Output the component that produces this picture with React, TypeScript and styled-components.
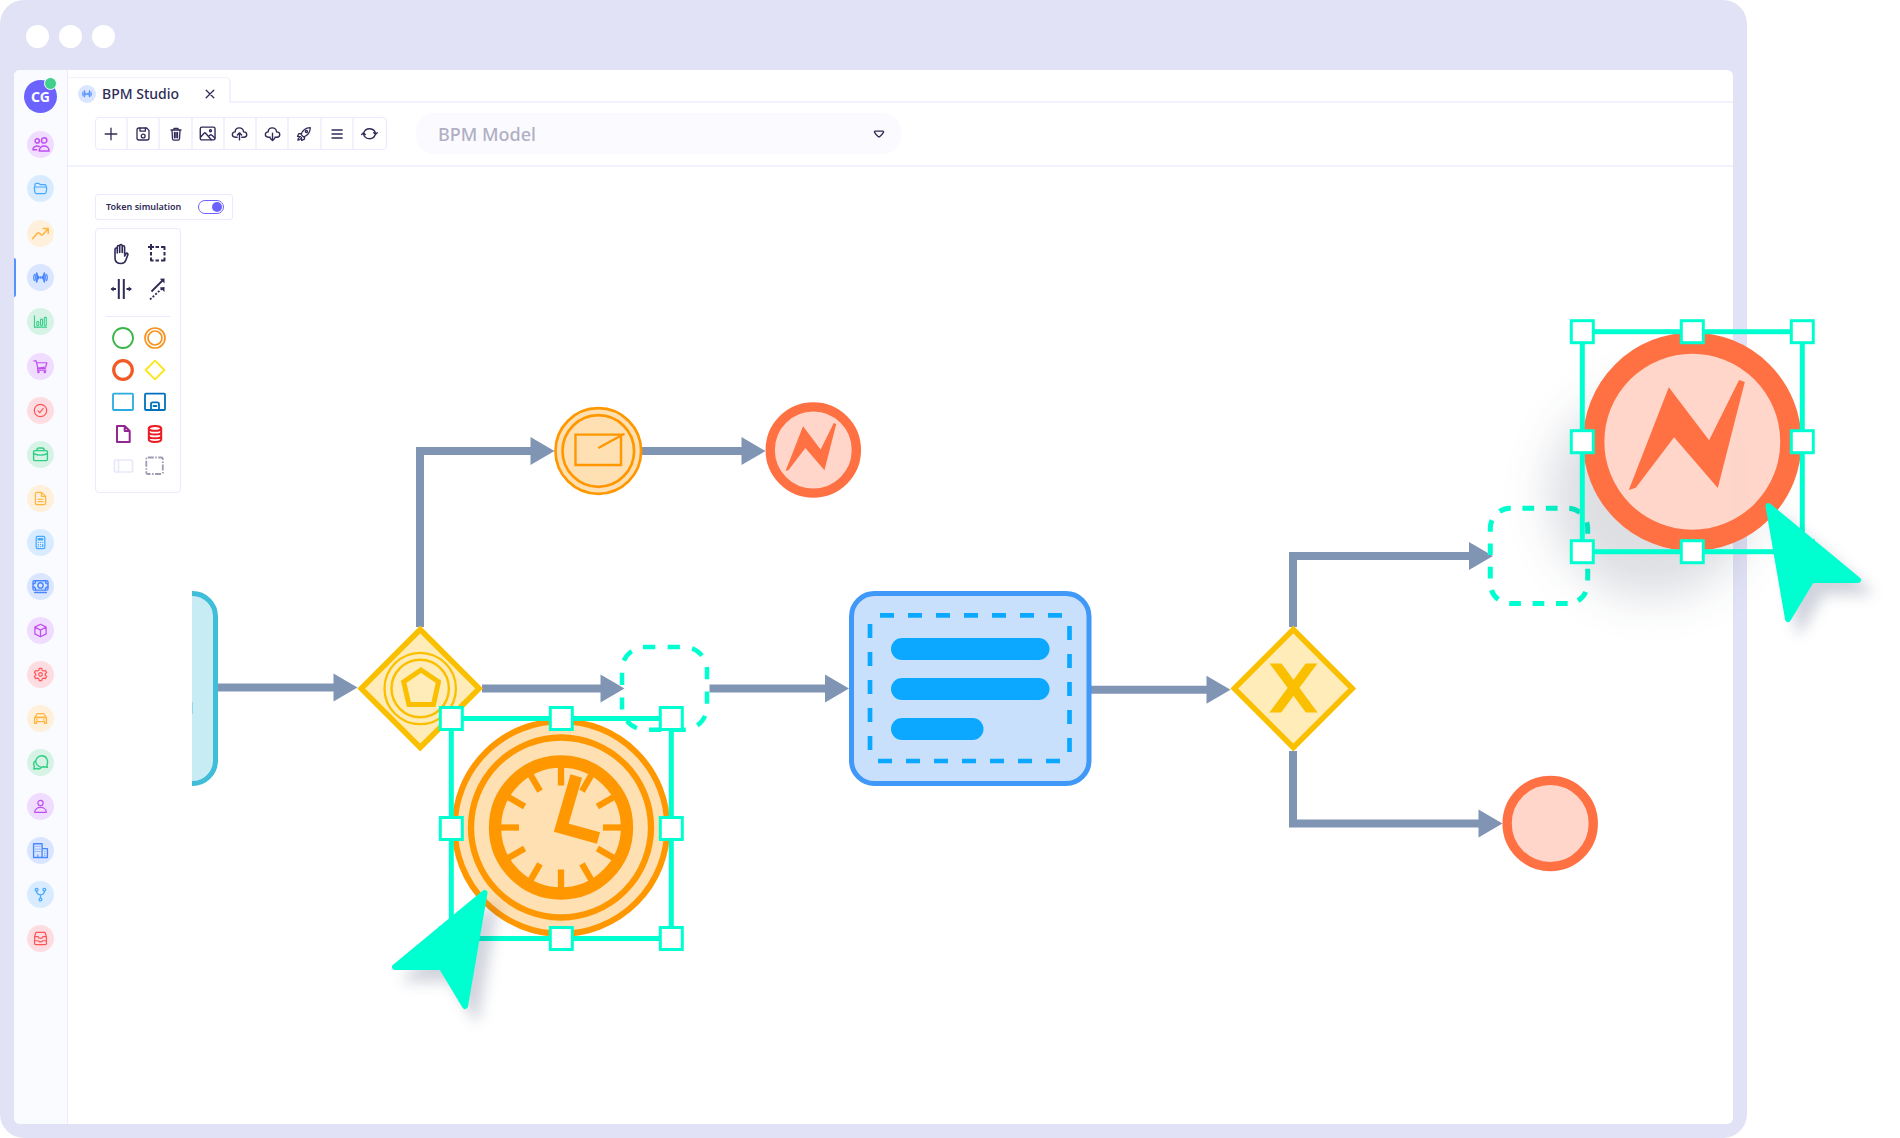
import React from "react";
import styled, { createGlobalStyle } from "styled-components";

const color = {
  frame: "#e2e2f6",
  line: "#f2f1fe",
  panelLine: "#ebe9ff",
  ink: "#2f2b57",
  muted: "#b0afc3",
  primary: "#6c63ff",
  flow: "#8094b4",
  select: "#00ffd0",
};

const GlobalStyle = createGlobalStyle`
  *, *::before, *::after { box-sizing: border-box; }
  body { margin: 0; background: #fff; font-family: "Noto Sans", "Open Sans", sans-serif; color: ${color.ink}; overflow-x: hidden; }
  button, select, input { font: inherit; color: inherit; margin: 0; }
`;

/* ---------- shell ---------- */

const Page = styled.div`
  display: flex;
  min-height: 100vh;
  padding-right: 153px;
`;

const Window = styled.div`
  flex: 1;
  display: flex;
  flex-direction: column;
  min-width: 0;
  padding: 0 14px 14px;
  border-radius: 24px;
  background: ${color.frame};
`;

const TitleBar = styled.div`
  display: flex;
  align-items: center;
  gap: 10px;
  height: 70px;
  padding: 3px 0 0 12px;
`;

const WindowDot = styled.span`
  width: 23px;
  height: 23px;
  border-radius: 50%;
  background: #fff;
`;

const Body = styled.div`
  flex: 1;
  display: flex;
  border-radius: 6px;
  background: #fff;
`;

const Sidebar = styled.nav`
  flex: none;
  display: flex;
  flex-direction: column;
  align-items: center;
  gap: 18px;
  width: 54px;
  padding-top: 10px;
  border-right: 1px solid ${color.panelLine};
  border-radius: 6px 0 0 6px;
  background: #fafbff;
`;

const Avatar = styled.button`
  position: relative;
  width: 33px;
  height: 33px;
  padding: 0;
  border: 0;
  border-radius: 50%;
  background: ${color.primary};
  color: #fff;
  font-size: 14px;
  font-weight: 700;
  line-height: 33px;
`;

const Presence = styled.span`
  position: absolute;
  top: -3px;
  right: 0;
  width: 13px;
  height: 13px;
  border: 1px solid #fff;
  border-radius: 50%;
  background: #3fd08c;
`;

const NavGroup = styled.div`
  display: flex;
  flex-direction: column;
  align-items: center;
  gap: 17px;
  width: 100%;
`;

const NavButton = styled.button<{ $bg: string; $fg: string }>`
  display: grid;
  place-items: center;
  width: 27px;
  height: 27px;
  padding: 0;
  border: 0;
  border-radius: 50%;
  background: ${(p) => p.$bg};
  color: ${(p) => p.$fg};
`;

const NavSlot = styled.div<{ $active: boolean }>`
  display: flex;
  justify-content: center;
  width: 100%;
  position: relative;
  &::before {
    content: "";
    display: ${(p) => (p.$active ? "block" : "none")};
    position: absolute;
    left: 0;
    top: -6px;
    bottom: -6px;
    width: 2px;
    border-radius: 0 2px 2px 0;
    background: #5593ff;
  }
`;

const Main = styled.main`
  flex: 1;
  display: flex;
  flex-direction: column;
  min-width: 0;
`;

const TabStrip = styled.div`
  display: flex;
  align-items: flex-end;
  height: 33px;
`;

const Tab = styled.div`
  display: flex;
  align-items: center;
  gap: 6px;
  width: 163px;
  height: 26px;
  padding: 6px 11px 0 10px;
  border: solid ${color.line};
  border-width: 1px 2px 0 0;
  border-radius: 0 5px 0 0;
`;

const TabBadge = styled.span`
  display: grid;
  place-items: center;
  width: 18px;
  height: 18px;
  border-radius: 50%;
  background: #dae6ff;
  color: #4a8bff;
`;

const TabLabel = styled.button`
  flex: 1;
  padding: 0;
  border: 0;
  background: none;
  text-align: left;
  white-space: nowrap;
  font-size: 14px;
  font-weight: 500;
  line-height: 18px;
`;

const TabClose = styled.button`
  display: grid;
  place-items: center;
  width: 16px;
  height: 16px;
  padding: 0;
  border: 0;
  background: none;
`;

const TabRest = styled.div`
  flex: 1;
  align-self: stretch;
  border-bottom: 2px solid ${color.line};
`;

const ActionBar = styled.div`
  display: flex;
  align-items: center;
  gap: 29px;
  height: 64px;
  padding: 0 0 1px 27px;
  border-bottom: 2px solid ${color.line};
`;

const ButtonGroup = styled.div`
  display: grid;
  grid-template-columns: repeat(9, 1fr);
  width: 292px;
  height: 33px;
  border: 1px solid ${color.panelLine};
  border-radius: 4px;
`;

const ToolButton = styled.button`
  display: grid;
  place-items: center;
  padding: 0;
  border: 0;
  background: none;
  &:not(:last-child) {
    border-right: 2px solid ${color.line};
  }
`;

const SelectBox = styled.label`
  flex: 0 1 485px;
  display: grid;
  align-items: center;
  > * {
    grid-area: 1 / 1;
  }
  > svg {
    justify-self: end;
    margin-right: 16px;
    pointer-events: none;
  }
`;

const ModelSelect = styled.select`
  appearance: none;
  width: 100%;
  height: 41px;
  padding: 0 40px 0 22px;
  border: 0;
  border-radius: 18px;
  background: #fbfaff;
  color: ${color.muted};
  font-size: 18px;
  font-weight: 500;
`;

/* ---------- canvas ---------- */

const Canvas = styled.section`
  flex: 1;
  position: relative;
  display: flex;
  flex-direction: column;
  align-items: flex-start;
  gap: 8px;
  padding: 27px;
`;

const Diagram = styled.svg`
  position: absolute;
  left: 0;
  top: 0;
  overflow: visible;
  pointer-events: none;
`;

const TokenPanel = styled.label`
  display: flex;
  align-items: center;
  gap: 17px;
  height: 26px;
  padding: 0 8px 1px 10px;
  border: 1px solid ${color.panelLine};
  border-radius: 3px;
  font-size: 9px;
  font-weight: 600;
  white-space: nowrap;
`;

const Switch = styled.input`
  appearance: none;
  display: flex;
  justify-content: flex-end;
  align-items: center;
  width: 26px;
  height: 14px;
  padding: 0 1px;
  border: 1px solid ${color.primary};
  border-radius: 7px;
  background: #fff;
  &:not(:checked) {
    justify-content: flex-start;
  }
  &::before {
    content: "";
    width: 10px;
    height: 10px;
    border-radius: 50%;
    background: ${color.primary};
  }
`;

const Palette = styled.div`
  width: 86px;
  padding: 7px 0 10px 2px;
  border: 1px solid ${color.panelLine};
  border-radius: 4px;
`;

const PaletteGrid = styled.div<{ $cell: number; $row: number }>`
  display: grid;
  justify-content: center;
  grid-template-columns: repeat(2, ${(p) => p.$cell}px);
  grid-auto-rows: ${(p) => p.$row}px;
`;

const PaletteRule = styled.hr`
  height: 1px;
  margin: 10px 10px 5px 8px;
  border: 0;
  background: ${color.panelLine};
`;

const PaletteButton = styled.button`
  display: grid;
  place-items: center;
  padding: 0;
  border: 0;
  background: none;
`;

/* ---------- icons ---------- */

type IconProps = { size?: number; box?: number; w?: number; stroke?: string; children: React.ReactNode };

const Icon = ({ size = 16, box = 16, w = 1.3, stroke = "currentColor", children }: IconProps) => (
  <svg
    width={size}
    height={size}
    viewBox={`0 0 ${box} ${box}`}
    fill="none"
    stroke={stroke}
    strokeWidth={w}
    strokeLinecap="round"
    strokeLinejoin="round"
    aria-hidden="true"
  >
    {children}
  </svg>
);

const SignalShape = () => (
  <>
    <circle cx="8" cy="8" r="0.8" fill="currentColor" />
    <path d="M1.500 4.800c-.9 2-.9 4.400 0 6.400M14.500 4.800c.9 2 .9 4.400 0 6.400" />
    <path fill="currentColor" fillOpacity="0.55" d="M4 3c-1.500 2.500-1.500 7.500 0 10 1-2 1-8 0-10zM12 3c1.500 2.500 1.500 7.500 0 10-1-2-1-8 0-10z" />
    <path d="M5.800 6.600v2.800M10.200 6.600v2.800" />
  </>
);

const tone = {
  purple: { bg: "#efdcff", fg: "#c04df0" },
  sky: { bg: "#d9ecff", fg: "#45a9ff" },
  amber: { bg: "#fff0db", fg: "#ffb53f" },
  blue: { bg: "#dae6ff", fg: "#4a86ff" },
  green: { bg: "#d6f3e6", fg: "#2fcf85" },
  red: { bg: "#fddde1", fg: "#ff5557" },
};

type NavItem = { label: string; tone: keyof typeof tone; icon: React.ReactNode; size?: number; active?: boolean };

const navGroups: NavItem[][] = [
  [
    {
      label: "Users",
      tone: "purple",
      size: 18,
      icon: (
        <>
          <circle cx="4.600" cy="4.400" r="1.900" />
          <circle cx="10.800" cy="3.900" r="2.400" />
          <path d="M6.400 13.400h8.800c0-6-8.800-6-8.800 0zM6.400 9.300C3.600 8.200.8 9.600.8 12.200h3.400" />
        </>
      ),
    },
    {
      label: "Folders",
      tone: "sky",
      icon: (
        <>
          <path d="M2 6.500V4.200c0-1 .6-1.700 1.600-1.700h2.500l1.500 1.300h4.800c1 0 1.600.6 1.600 1.600v1.100" />
          <path d="M2.600 6.400h10.800c.9 0 1.300.6 1.200 1.400l-.5 4c-.1 1-.7 1.700-1.700 1.700H3.600c-1 0-1.600-.7-1.700-1.700l-.5-4c-.1-.8.3-1.400 1.200-1.400z" />
        </>
      ),
    },
  ],
  [
    { label: "Trends", tone: "amber", size: 19, icon: <path d="M1.500 12.300l3.800-4.500c.5-.6 1-.6 1.600-.1l1.600 1.300c.6.500 1.100.4 1.600-.1L14.300 4M10.300 3.800h4.200v4" /> },
    { label: "BPM Studio", tone: "blue", active: true, icon: <SignalShape /> },
    {
      label: "Reports",
      tone: "green",
      icon: <path strokeWidth="1.100" d="M1.500 1.800V14h13M4 8.700c0-1 2.200-1 2.200 0v2.800c0 1-2.200 1-2.200 0zM8 6.200c0-1 2.200-1 2.200 0v5.300c0 1-2.200 1-2.200 0zM12 4.300c0-1 2.200-1 2.200 0v7.200c0 1-2.200 1-2.200 0z" />,
    },
  ],
  [
    {
      label: "Orders",
      tone: "purple",
      icon: (
        <>
          <path d="M1 2h2.400l1.900 8.300h7.900M3.800 4h11l-1.300 4.700-8.600 1M5.300 10.300l-.5 1.700h9" />
          <circle cx="5.800" cy="13.800" r=".7" />
          <circle cx="12.600" cy="13.800" r=".7" />
        </>
      ),
    },
    {
      label: "Checks",
      tone: "red",
      icon: (
        <>
          <circle cx="8" cy="8" r="6.600" />
          <path d="M5.300 8.400l1.900 1.900 3.600-4.400" />
        </>
      ),
    },
    {
      label: "Portfolio",
      tone: "green",
      size: 17,
      icon: (
        <>
          <rect x="1.500" y="4.400" width="13" height="9.400" rx="1" />
          <path d="M4.500 4.200c0-2 1-2.300 2-2.300h3c1 0 2 .3 2 2.300M1.500 7.300c4 1.600 9 1.600 13 0M7 8.600h2" />
        </>
      ),
    },
    { label: "Documents", tone: "amber", icon: <path d="M4.200 1.400h5l4.300 4.300v7.200c0 1-.6 1.700-1.600 1.700H4.200c-1 0-1.600-.7-1.600-1.700V3.100c0-1 .6-1.700 1.600-1.700zM9 1.600v4.200h4.300M5.400 8.800h5.200M5.400 11.400h5.200" /> },
    {
      label: "Accounting",
      tone: "sky",
      icon: (
        <>
          <rect x="3.400" y="1.400" width="9.200" height="13.200" rx="1.500" />
          <path d="M5.600 3.800h4.800v1.400H5.600zM5.700 8h.1M8 8h.1M10.300 8h.1M5.700 10.200h.1M8 10.200h.1M5.700 12.300h.1M8 12.300h.1M10.300 10.200v2.100" />
        </>
      ),
    },
    {
      label: "Payments",
      tone: "blue",
      size: 17,
      icon: (
        <>
          <rect x="1" y="2.600" width="14" height="8.800" rx="1" />
          <circle cx="8" cy="7" r="2.500" />
          <path d="M1 5.500c1.500 0 2.500-1 2.500-2.700M15 5.500c-1.500 0-2.500-1-2.500-2.700M1 8.500c1.500 0 2.500 1 2.500 2.700M15 8.500c-1.500 0-2.500 1-2.500 2.700M2.500 13.600h11" />
        </>
      ),
    },
    { label: "Products", tone: "purple", icon: <path d="M8 1.400l6 3v7.200l-6 3-6-3V4.400zM2.200 4.600L8 7.600l5.800-3M8 7.600v6.800" /> },
    {
      label: "Settings",
      tone: "red",
      icon: (
        <>
          <circle cx="8" cy="8" r="1.900" />
          <path d="M6.700 1.500h2.600l.5 2 1.400.8 2-.6 1.300 2.300L13 7.400v1.300l1.500 1.400-1.300 2.300-2-.6-1.400.8-.5 1.900H6.700l-.5-1.900-1.400-.8-2 .6-1.300-2.300L3 8.700V7.400L1.500 6l1.300-2.300 2 .6 1.400-.8z" />
        </>
      ),
    },
    { label: "Fleet", tone: "amber", icon: <path d="M2 8V6.700l1.800-3c.3-.6.7-.8 1.200-.8h6c.5 0 .9.2 1.200.8l1.800 3V8M3 6.500h10M1.600 7.200h12.800v6.100h-2v-2H3.600v2h-2zM4.200 9v.8M11.800 9v.8" /> },
    {
      label: "Chat",
      tone: "green",
      size: 17,
      icon: <path d="M14.500 12.600l-.5-2.300c1.900-4-.6-8.600-4.800-8.600S3 5.200 3.800 8.400c.8 3 4 4.700 7 3.600zM3.700 6.300C1.600 7.400 1.300 9.600 2.200 11.400l-.5 2.700 2.700-.5c1.800.8 3.800.3 4.800-1.200" />,
    },
    {
      label: "Profile",
      tone: "purple",
      icon: (
        <>
          <circle cx="8" cy="4.300" r="2.800" />
          <path d="M1.800 14.200c0-7 12.400-7 12.400 0z" />
        </>
      ),
    },
    {
      label: "Company",
      tone: "blue",
      size: 17,
      icon: (
        <>
          <path d="M1.500 14.600v-13h8v13zM9.500 6.200h5v8.400h-5" />
          <path strokeWidth="1" d="M3.600 4h.1M5.500 4h.1M7.400 4h.1M3.600 6.500h.1M5.500 6.500h.1M7.400 6.500h.1M3.600 9h.1M5.500 9h.1M7.400 9h.1M5.500 12v2M12 8.500h.1M12 10.500h.1M12 12.500h.1" />
        </>
      ),
    },
    {
      label: "Workflows",
      tone: "sky",
      icon: (
        <>
          <circle cx="3.900" cy="2.900" r="1.500" />
          <circle cx="12.100" cy="2.900" r="1.500" />
          <circle cx="8" cy="13.400" r="1.500" />
          <path d="M3.900 4.500c0 2.200 1.200 3.600 4.100 3.900 2.900-.3 4.100-1.700 4.100-3.900M8 8.400v3.400" />
        </>
      ),
    },
    { label: "Archive", tone: "red", icon: <path d="M3.200 1.500h9.600l1.500 4.300v7.500c0 .8-.4 1.200-1.200 1.200H2.900c-.8 0-1.200-.4-1.200-1.200V5.800zM1.800 6h3.700c.5 2.600 4.500 2.600 5 0h3.700M1.800 10.400h4c.6 1.700 3.800 1.700 4.400 0h4" /> },
  ],
];

const actions: { label: string; icon: React.ReactNode; size?: number }[] = [
  { label: "New", icon: <path d="M8 2.200v11.600M2.200 8h11.600" /> },
  {
    label: "Save",
    icon: (
      <>
        <path d="M4 2h7.600L14 4.400V12c0 1.200-.8 2-2 2H4c-1.200 0-2-.8-2-2V4c0-1.200.8-2 2-2z" />
        <path d="M5 2.200v2.900h5.400V2.200" />
        <circle cx="8.200" cy="10" r="1.900" />
      </>
    ),
  },
  { label: "Delete", icon: <path d="M3 4h10M6 4V2.300h4V4M4 4l.5 8.900c.1.800.5 1.200 1.300 1.200h4.400c.8 0 1.200-.4 1.300-1.200L12 4M6.500 6.300v5.500M8 6.300v5.500M9.500 6.300v5.500" /> },
  {
    label: "Export image",
    size: 17,
    icon: (
      <>
        <rect x="1.200" y="2" width="13.900" height="12" rx="1.500" />
        <circle cx="10.800" cy="5.400" r=".9" />
        <path d="M1.600 11.300l3.200-3.600c.5-.5.900-.5 1.400 0l5.400 6.200M9 10.800l1.500-1.300c.5-.4.900-.4 1.400 0l3 2.800" />
      </>
    ),
  },
  { label: "Upload", size: 17, icon: <path d="M5.800 11.500H4.200C.2 11.300.5 6.700 3.900 6.500c.3-5 7.300-5 8 0 3.700 0 4 4.800.2 5h-1.900M8 14V7.600M6 9.400l2-2 2 2" /> },
  { label: "Download", size: 17, icon: <path d="M5.800 11.500H4.200C.2 11.300.5 6.700 3.900 6.500c.3-5 7.300-5 8 0 3.700 0 4 4.800.2 5h-1.900M8 7.800v6.700M6 12.700l2 2 2-2" /> },
  {
    label: "Deploy",
    icon: (
      <>
        <path d="M5 8.400c1.500-4 4.500-6.500 9.300-6.700-.2 4.800-2.700 7.800-6.700 9.300zM5.600 7.300l-2.700.3-1.400 2.700 3 .3M8.700 10.400l-.3 2.700-2.700 1.400-.3-3M3.300 11.500c-1.200.6-1.400 1.800-1.400 2.700.9 0 2.100-.3 2.700-1.400" />
        <circle cx="10.400" cy="5.600" r="1.100" />
      </>
    ),
  },
  { label: "Menu", icon: <path d="M3 4h10.200M3 8h10.200M3 12h10.200" /> },
  { label: "Refresh", size: 17, icon: <path d="M2.500 7.500A5.800 5.800 0 0 1 13.700 8.300M13.500 9A5.800 5.800 0 0 1 2.300 8M12 7.200l1.700 1.500 1.600-1.500M.7 8.900l1.600-1.500L4 8.900" /> },
];

const tools: { label: string; icon: React.ReactNode }[] = [
  {
    label: "Hand tool",
    icon: (
      <path d="M5 11.800V6.500c0-2 2.300-2 2.300 0V10M7.300 9.500V4c0-2 2.400-2 2.400 0v5.500M9.700 9V3c0-2 2.500-2 2.500 0v6M12.200 9.500V4.300c0-2 2.400-2 2.400 0V11M14.600 13l1.100-2c.9-1.500 2.600-.8 2.100.9l-2 5.300c-.8 2.200-2.200 3.300-4.600 3.300-4 0-6.200-2-6.200-5.500v-3.500" />
    ),
  },
  {
    label: "Lasso tool",
    icon: (
      <g strokeLinecap="butt" strokeWidth="2">
        <path d="M4 1v6M1 4h6" />
        <path d="M8.500 4H12M14 4h3.500v3M17.500 9v3.500M17.500 14.500v3H14M12 17.500H8.500M6.500 17.500H4v-3M4 12.500V9" />
      </g>
    ),
  },
  {
    label: "Space tool",
    icon: (
      <g strokeLinecap="butt" strokeWidth="2">
        <path d="M8.800 1v20M13.800 1v20M1.500 11H6M16.500 11H21" />
        <path d="M3.700 8.500v5L.5 11zM18.700 8.500v5L22 11z" fill="currentColor" strokeWidth="0" />
      </g>
    ),
  },
  {
    label: "Connect tool",
    icon: (
      <g strokeLinecap="butt" strokeWidth="1.800">
        <path d="M4.500 13.500L15.500 2.500" />
        <path strokeDasharray="2 1.600" d="M3 21.500L15 10.500" />
        <path d="M17.500 .5v5L12.800 .8zM17.500 9v5l-4.700-4.500z" fill="currentColor" strokeWidth="0" />
      </g>
    ),
  },
];

const shapes: { label: string; stroke: string; icon: React.ReactNode }[] = [
  { label: "Start event", stroke: "#39b54a", icon: <circle cx="11" cy="11" r="10" strokeWidth="1.800" /> },
  {
    label: "Intermediate event",
    stroke: "#f7931e",
    icon: (
      <g strokeWidth="1.700">
        <circle cx="11" cy="11" r="10" />
        <circle cx="11" cy="11" r="7" />
      </g>
    ),
  },
  { label: "End event", stroke: "#f15a24", icon: <circle cx="11" cy="11" r="9.300" strokeWidth="3.200" /> },
  { label: "Gateway", stroke: "#fce621", icon: <path strokeWidth="2" d="M11 1.600L20.400 11 11 20.400 1.600 11z" /> },
  { label: "Task", stroke: "#29abe2", icon: <rect x="1" y="2.700" width="20" height="16.300" rx="1" strokeWidth="1.800" /> },
  {
    label: "Subprocess",
    stroke: "#0071bc",
    icon: (
      <g strokeWidth="1.800">
        <rect x="1" y="2.700" width="20" height="16.300" rx="1" />
        <path d="M7 19v-6c0-1 .5-1.700 1.500-1.700h5c1 0 1.500.7 1.500 1.700v6M9.500 15h3" />
      </g>
    ),
  },
  { label: "Data object", stroke: "#93278f", icon: <path strokeWidth="2" d="M5 3h7.700l5 5v11H5zM12.700 3v5h5" /> },
  {
    label: "Data store",
    stroke: "#ed1c24",
    icon: (
      <g strokeWidth="2">
        <ellipse cx="11" cy="5.400" rx="6.200" ry="2.400" />
        <path d="M4.800 5.400v11.200c0 3.200 12.400 3.200 12.400 0V5.400M4.800 9.200c0 3 12.400 3 12.400 0M4.800 13c0 3 12.400 3 12.400 0" />
      </g>
    ),
  },
  {
    label: "Participant",
    stroke: "#e9e8fb",
    icon: (
      <g strokeWidth="1.700">
        <rect x="2.500" y="5" width="18" height="12" rx="1" />
        <path d="M6.500 5v12" />
      </g>
    ),
  },
  { label: "Group", stroke: "#9d9cb3", icon: <rect x="2.300" y="2.500" width="16.500" height="16.500" rx="1.500" strokeWidth="1.800" strokeDasharray="6 1.500 1.500 1.500" strokeLinecap="butt" /> },
];

/* ---------- diagram parts ---------- */

type Point = [number, number];

/* A connector through the given points, closed by a solid arrow head that points right. */
const Flow = ({ points }: { points: Point[] }) => {
  const [tx, ty] = points[points.length - 1];
  const line = [...points.slice(0, -1), [tx - 23, ty] as Point];
  return (
    <g>
      <polyline points={line.map((p) => p.join(",")).join(" ")} fill="none" stroke={color.flow} strokeWidth="8" />
      <path d={`M${tx - 24} ${ty - 14}L${tx} ${ty}L${tx - 24} ${ty + 14}z`} fill={color.flow} />
    </g>
  );
};

const Gateway = ({ cx, cy, children }: { cx: number; cy: number; children: React.ReactNode }) => (
  <g transform={`translate(${cx} ${cy})`}>
    <path d="M0-59L59 0L0 59L-59 0z" fill="#ffecb8" stroke="#fac000" strokeWidth="5.500" />
    {children}
  </g>
);

const Bolt = () => (
  <path d="M-63.500 48.300L-23.500-54.400L16.800-1.400L46.800-61.700L52.500-59.700L25.500 46.300L-18.200-4.400L-56.500 46z" fill="#ff7043" />
);

const ErrorEvent = ({ cx, cy, scale = 1, bolt = true }: { cx: number; cy: number; scale?: number; bolt?: boolean }) => (
  <g transform={`translate(${cx} ${cy}) scale(${scale})`}>
    <circle r="98.600" fill="#ffd5c8" fillOpacity="0.98" stroke="#ff7043" strokeWidth="21.300" />
    {bolt && <Bolt />}
  </g>
);

const Selection = ({ x, y }: { x: number; y: number }) => {
  const side = 220;
  const stops = [0, side / 2, side];
  return (
    <g transform={`translate(${x} ${y})`} stroke={color.select}>
      <rect width={side} height={side} fill="none" strokeWidth="5" />
      {stops.flatMap((sx) =>
        stops
          .filter((sy) => !(sx === side / 2 && sy === side / 2))
          .map((sy) => <rect key={`${sx}-${sy}`} x={sx - 11} y={sy - 11} width="22" height="22" fill="#fff" strokeWidth="3" />),
      )}
    </g>
  );
};

const Pointer = ({ x, y, flip = false }: { x: number; y: number; flip?: boolean }) => (
  <g filter="url(#pointer-shadow)">
    <path
      transform={`translate(${x} ${y}) scale(${flip ? -1 : 1} 1)`}
      d="M0 0L89.500 74H45.500Q43 74 41.500 76.500L19.500 113z"
      fill={color.select}
      stroke={color.select}
      strokeWidth="6"
      strokeLinejoin="round"
    />
  </g>
);

const Clock = () => (
  <g transform="translate(561 827.500)" fill="none" stroke="#ff9800">
    <circle r="106.300" fill="#ffe0b3" strokeWidth="6" />
    <circle r="90" strokeWidth="6.300" />
    <circle r="66" strokeWidth="12.300" />
    {Array.from({ length: 12 }, (_, i) => (
      <path key={i} d="M0-62V-42" strokeWidth="6.300" transform={`rotate(${i * 30})`} />
    ))}
    <path d="M15.300-51.500L0.300 0.200L37.500 10.500" strokeWidth="12" />
  </g>
);

const ProcessDiagram = () => (
  <Diagram width="1832" height="971" viewBox="68 167 1832 971" role="img" aria-label="Process model">
    <defs>
      <filter id="pointer-shadow" x="-40%" y="-40%" width="190%" height="190%" colorInterpolationFilters="sRGB">
        <feDropShadow dx="11" dy="12" stdDeviation="7" floodColor="#1b2a55" floodOpacity="0.2" />
      </filter>
      <filter id="soft" x="-50%" y="-50%" width="200%" height="200%" colorInterpolationFilters="sRGB">
        <feGaussianBlur stdDeviation="22" />
      </filter>
      <clipPath id="left-edge">
        <rect x="192" y="580" width="40" height="220" />
      </clipPath>
      <clipPath id="marker">
        <rect x="-30" y="-25" width="60" height="49" />
      </clipPath>
    </defs>

    <rect x="100" y="593.500" width="115.500" height="190" rx="23" fill="#c8ecf4" stroke="#40bdd8" strokeWidth="5" clipPath="url(#left-edge)" />
    <rect x="192" y="702" width="1" height="12" fill="#8fd8e6" />

    <Flow points={[[218, 687.5], [357.5, 687.5]]} />
    <Flow points={[[420, 627], [420, 451], [554.5, 451]]} />
    <Flow points={[[642, 451], [765.5, 451]]} />
    <Flow points={[[482, 688.5], [624.5, 688.5]]} />
    <Flow points={[[709.5, 688.5], [849, 688.5]]} />
    <Flow points={[[1091, 689.7], [1230.5, 689.7]]} />
    <Flow points={[[1293, 627], [1293, 556], [1493, 556]]} />
    <Flow points={[[1293, 751], [1293, 823.5], [1502.5, 823.5]]} />

    <Gateway cx={420.2} cy={688.5}>
      <g fill="none" stroke="#fac000">
        <circle r="35.700" strokeWidth="2.300" />
        <circle r="28.700" strokeWidth="2.500" />
        <path d="M.8-18.500L18.300-6.700L13.300 16H-11.300L-16.500-6.700z" strokeWidth="5" />
      </g>
    </Gateway>
    <Gateway cx={1293.3} cy={688.5}>
      <path d="M-21.400-30L22.100 29M21.900-30L-21.700 29" stroke="#fac000" strokeWidth="9.500" clipPath="url(#marker)" />
    </Gateway>

    <g fill="none" stroke="#ff9800">
      <circle cx="598.300" cy="451" r="42.800" fill="#ffe0b3" strokeWidth="2.700" />
      <circle cx="598.300" cy="451" r="35.800" strokeWidth="2.700" />
      <path d="M575.500 434.600H621V465H575.500zM598.300 448L624.500 433.700" strokeWidth="2.400" />
    </g>

    <ErrorEvent cx={813.3} cy={450} scale={0.437} />
    <ErrorEvent cx={1550.2} cy={823.5} scale={0.437} bolt={false} />

    <path
      d="M643 647H684A23 23 0 0 1 707 670V706.700A23 23 0 0 1 684 729.700H645A23 23 0 0 1 622 706.700V670A23 23 0 0 1 643 647"
      fill="none"
      stroke={color.select}
      strokeWidth="4.500"
      strokeDasharray="12.300 12.300"
    />
    <path
      d="M1567.700 603.500H1510.300A20 20 0 0 1 1490.300 583.500V528.300A20 20 0 0 1 1510.300 508.300H1567.700A20 20 0 0 1 1587.700 528.300V583.500A20 20 0 0 1 1567.700 603.500"
      fill="none"
      stroke={color.select}
      strokeWidth="5"
      strokeDasharray="11.700 11.700"
    />

    <rect x="851.500" y="593.500" width="237.500" height="190" rx="23" fill="#c8e0fb" stroke="#4098f8" strokeWidth="5" />
    <path d="M880 615.300H1063M1069.500 626V753M1060 761H877M870 750V624" fill="none" stroke="#0ca8ff" strokeWidth="4.700" strokeDasharray="14 14" />
    <g fill="#0ca8ff">
      <rect x="891" y="638" width="158.500" height="22" rx="11" />
      <rect x="891" y="678" width="158.500" height="22" rx="11" />
      <rect x="891" y="718" width="92.500" height="22" rx="11" />
    </g>

    <Clock />
    <Selection x={451.3} y={718.5} />
    <Pointer x={484.5} y={893} flip />

    <circle cx="1652" cy="494" r="104" fill="#1b2a44" fillOpacity="0.15" filter="url(#soft)" />
    <ErrorEvent cx={1692.3} cy={441.7} />
    <Selection x={1582.3} y={331.7} />
    <Pointer x={1768.5} y={506} />
  </Diagram>
);

/* ---------- app ---------- */

export default function App() {
  return (
    <>
      <GlobalStyle />
      <Page>
        <Window>
          <TitleBar>
            <WindowDot />
            <WindowDot />
            <WindowDot />
          </TitleBar>
          <Body>
            <Sidebar aria-label="Modules">
              <Avatar type="button">
                CG
                <Presence />
              </Avatar>
              {navGroups.map((group, g) => (
                <NavGroup key={g}>
                  {group.map((item) => (
                    <NavSlot key={item.label} $active={!!item.active}>
                      <NavButton type="button" aria-label={item.label} $bg={tone[item.tone].bg} $fg={tone[item.tone].fg}>
                        <Icon size={item.size ?? 15}>{item.icon}</Icon>
                      </NavButton>
                    </NavSlot>
                  ))}
                </NavGroup>
              ))}
            </Sidebar>
            <Main>
              <TabStrip>
                <Tab>
                  <TabBadge>
                    <Icon size={10}>
                      <SignalShape />
                    </Icon>
                  </TabBadge>
                  <TabLabel type="button">BPM Studio</TabLabel>
                  <TabClose type="button" aria-label="Close tab">
                    <Icon>
                      <path d="M4.200 4.200l7.600 7.600M11.800 4.200l-7.600 7.600" />
                    </Icon>
                  </TabClose>
                </Tab>
                <TabRest />
              </TabStrip>
              <ActionBar>
                <ButtonGroup>
                  {actions.map((a) => (
                    <ToolButton key={a.label} type="button" aria-label={a.label}>
                      <Icon size={a.size ?? 16}>{a.icon}</Icon>
                    </ToolButton>
                  ))}
                </ButtonGroup>
                <SelectBox>
                  <ModelSelect aria-label="Model" defaultValue="model">
                    <option value="model">BPM Model</option>
                  </ModelSelect>
                  <Icon size={12} box={12} w={1.3}>
                    <path d="M2.200 3.200h7.600c.8 0 1 .6.6 1.200C9.500 6 8.300 7.300 6.900 8.400c-.6.5-1.200.5-1.800 0C3.700 7.300 2.500 6 1.600 4.400c-.4-.6-.2-1.200.6-1.200z" />
                  </Icon>
                </SelectBox>
              </ActionBar>
              <Canvas>
                <ProcessDiagram />
                <TokenPanel>
                  Token simulation
                  <Switch type="checkbox" role="switch" defaultChecked />
                </TokenPanel>
                <Palette>
                  <PaletteGrid $cell={37} $row={35}>
                    {tools.map((t) => (
                      <PaletteButton key={t.label} type="button" aria-label={t.label}>
                        <Icon size={22} box={22} w={1.6}>
                          {t.icon}
                        </Icon>
                      </PaletteButton>
                    ))}
                  </PaletteGrid>
                  <PaletteRule />
                  <PaletteGrid $cell={32} $row={32}>
                    {shapes.map((s) => (
                      <PaletteButton key={s.label} type="button" aria-label={s.label}>
                        <Icon size={22} box={22} stroke={s.stroke}>
                          {s.icon}
                        </Icon>
                      </PaletteButton>
                    ))}
                  </PaletteGrid>
                </Palette>
              </Canvas>
            </Main>
          </Body>
        </Window>
      </Page>
    </>
  );
}
